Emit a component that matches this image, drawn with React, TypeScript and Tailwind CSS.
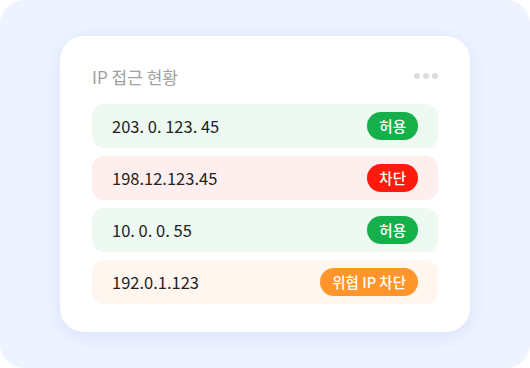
const rows = [
  { ip: "203. 0. 123. 45", label: "허용", row: "bg-[#eef9f1]", badge: "bg-[#16b04a]" },
  { ip: "198.12.123.45", label: "차단", row: "bg-[#ffeeee]", badge: "bg-[#ff1a0d]" },
  { ip: "10. 0. 0. 55", label: "허용", row: "bg-[#eef9f1]", badge: "bg-[#16b04a]" },
  { ip: "192.0.1.123", label: "위협 IP 차단", row: "bg-[#fff6f0]", badge: "bg-[#ff952b]" },
];

export default function App() {
  return (
    <div
      className="w-[530px] h-[368px] bg-white"
      style={{ fontFamily: '"Noto Sans CJK KR", "Noto Sans", sans-serif' }}
    >
      <div className="w-full h-full rounded-[24px] bg-[#edf3ff] pt-[36px] pl-[60px]">
        <div className="w-[410px] h-[296px] rounded-[24px] bg-white shadow-[0_4px_16px_rgba(120,150,230,0.18)] px-[32px] pt-[26px]">
          <div className="flex items-center justify-between h-[28px]">
            <span className="text-[17px] text-[#a0a0a0] leading-none">IP 접근 현황</span>
            <div className="flex gap-[3px]">
              <span className="w-[6px] h-[6px] rounded-full bg-[#dcdcdc]" />
              <span className="w-[6px] h-[6px] rounded-full bg-[#dcdcdc]" />
              <span className="w-[6px] h-[6px] rounded-full bg-[#dcdcdc]" />
            </div>
          </div>
          <div className="mt-[14px] flex flex-col gap-[8px]">
            {rows.map((r) => (
              <div
                key={r.ip}
                className={`h-[44px] rounded-[12px] ${r.row} flex items-center justify-between pl-[20px] pr-[20px]`}
              >
                <span className="text-[16.5px] text-[#222] leading-none">{r.ip}</span>
                <span
                  className={`h-[28px] rounded-full ${r.badge} text-white text-[14.5px] font-medium px-[12px] flex items-center leading-none`}
                >
                  {r.label}
                </span>
              </div>
            ))}
          </div>
        </div>
      </div>
    </div>
  );
}
